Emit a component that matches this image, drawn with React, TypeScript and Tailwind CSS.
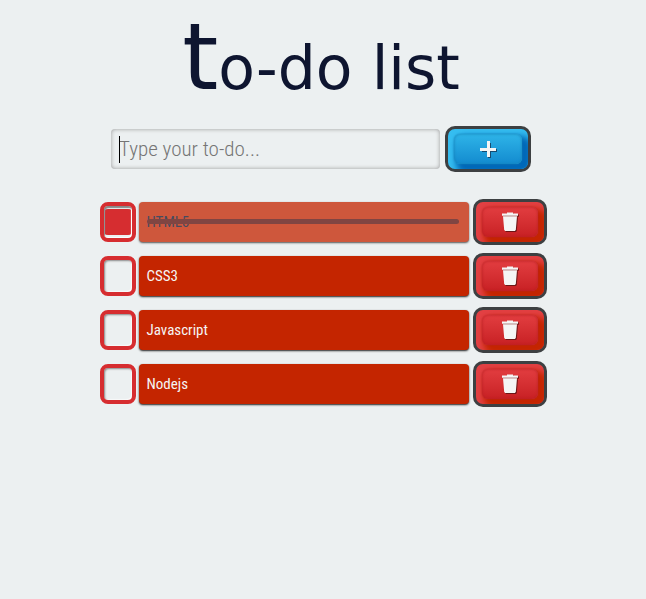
import { useState } from "react";
import type { FormEvent } from "react";

type Todo = { id: number; label: string; done: boolean };

const initialTodos: Todo[] = [
  { id: 1, label: "HTML5", done: true },
  { id: 2, label: "CSS3", done: false },
  { id: 3, label: "Javascript", done: false },
  { id: 4, label: "Nodejs", done: false },
];

function PlusIcon() {
  return (
    <svg width="18" height="18" viewBox="0 0 18 18" aria-hidden="true">
      <path d="M10.5 3v15M3 10.5h15" stroke="#174b70" strokeWidth="3" />
      <path d="M9.5 1v16M1 9.5h16" stroke="#f5f5f5" strokeWidth="3" />
    </svg>
  );
}

function TrashIcon() {
  const shape = "M6 0.5h6v1h5v2.2H1V1.5h5zM2 4.3h14L14.8 18l-1 1H4.2l-1-1z";
  return (
    <svg width="20" height="22" viewBox="0 0 20 22" aria-hidden="true">
      <path d={shape} transform="translate(2 2)" fill="#6d1616" />
      <path d={shape} transform="translate(1 1)" fill="#f5f5f5" />
    </svg>
  );
}

function TodoRow({ todo, onToggle, onDelete }: { todo: Todo; onToggle: () => void; onDelete: () => void }) {
  const id = `todo-${todo.id}`;
  return (
    <li className="flex items-center">
      <input
        id={id}
        type="checkbox"
        checked={todo.done}
        onChange={onToggle}
        className="h-10 w-9 shrink-0 appearance-none rounded-lg border-4 border-[#d62d30] px-px py-[3px] shadow-[inset_1px_1px_2px_#888,inset_-1px_-1px_1px_#fff] checked:bg-[#d62d30] checked:bg-clip-content checked:shadow-[inset_1px_2px_1px_#888,inset_-1px_-1px_1px_#fff]"
      />
      <label
        htmlFor={id}
        className={`relative ml-[3px] flex h-10 min-w-0 flex-1 items-center rounded bg-[#c42500] px-2 text-[15px] shadow-[0_1px_2px_#222] ${todo.done ? "text-[#0e1530] opacity-75" : "text-[#f5f5f5]"}`}
      >
        {todo.label}
        {todo.done && <span className="absolute inset-x-2 top-[17px] mr-[2px] h-[5px] rounded-full bg-[#5c0c08]" />}
      </label>
      <button
        type="button"
        aria-label={`Delete ${todo.label}`}
        onClick={onDelete}
        className="ml-1 flex h-[46px] w-[74px] shrink-0 overflow-hidden rounded-[10px] border-[3px] border-[#3d4042] bg-[#e24043] px-[6px] py-[5px]"
      >
        <span className="flex h-[30px] flex-1 items-center justify-center rounded-md bg-linear-to-b from-[#e23d40] to-[#c82024] shadow-[inset_0_0_3px_#b82022,0_0_2px_#b82022,6px_6px_6px_4px_#c42500]">
          <TrashIcon />
        </span>
      </button>
    </li>
  );
}

export default function App() {
  const [todos, setTodos] = useState(initialTodos);
  const [draft, setDraft] = useState("");

  const addTodo = (event: FormEvent) => {
    event.preventDefault();
    if (!draft.trim()) return;
    setTodos([...todos, { id: Date.now(), label: draft.trim(), done: false }]);
    setDraft("");
  };

  return (
    <main className="flex min-h-screen flex-col items-center bg-[#ecf0f1] px-4 pt-1.5 font-['Liberation_Sans_Narrow','Roboto_Condensed','Liberation_Sans',sans-serif]">
      <h1 className="mr-1 font-['DejaVu_Sans',sans-serif] text-[60px] leading-[104px] text-[#0e1530] first-letter:text-[92px] first-letter:leading-[104px]">
        to-do list
      </h1>
      <form onSubmit={addTodo} className="mt-1.5 mr-1 flex w-full max-w-[420px] items-center gap-[5px]">
        <div className="relative flex min-w-0 flex-1 items-center">
          <input
            type="text"
            autoFocus
            aria-label="New to-do"
            placeholder="Type your to-do..."
            value={draft}
            onChange={(event) => setDraft(event.target.value)}
            className="h-10 w-full rounded px-2 text-[21px] font-light text-black caret-black shadow-[inset_0_0_4px_#999] outline-none placeholder:text-[#757575] placeholder-shown:caret-transparent"
          />
          {draft === "" && <span className="pointer-events-none absolute left-2 h-[27px] w-px bg-black" />}
        </div>
        <button
          type="submit"
          aria-label="Add to-do"
          className="flex h-[46px] w-[86px] shrink-0 overflow-hidden rounded-[10px] border-[3px] border-[#3d4042] bg-[#35bdf0] px-[6px] py-[5px]"
        >
          <span className="flex h-[30px] flex-1 items-center justify-center rounded-md bg-linear-to-b from-[#2eb4e8] to-[#138bcf] shadow-[inset_0_0_3px_#1682b8,0_0_2px_#1682b8,6px_6px_6px_4px_#0068b8]">
            <PlusIcon />
          </span>
        </button>
      </form>
      <ul className="mt-[27px] flex w-full max-w-[447px] flex-col gap-2">
        {todos.map((todo) => (
          <TodoRow
            key={todo.id}
            todo={todo}
            onToggle={() => setTodos(todos.map((t) => (t.id === todo.id ? { ...t, done: !t.done } : t)))}
            onDelete={() => setTodos(todos.filter((t) => t.id !== todo.id))}
          />
        ))}
      </ul>
    </main>
  );
}
